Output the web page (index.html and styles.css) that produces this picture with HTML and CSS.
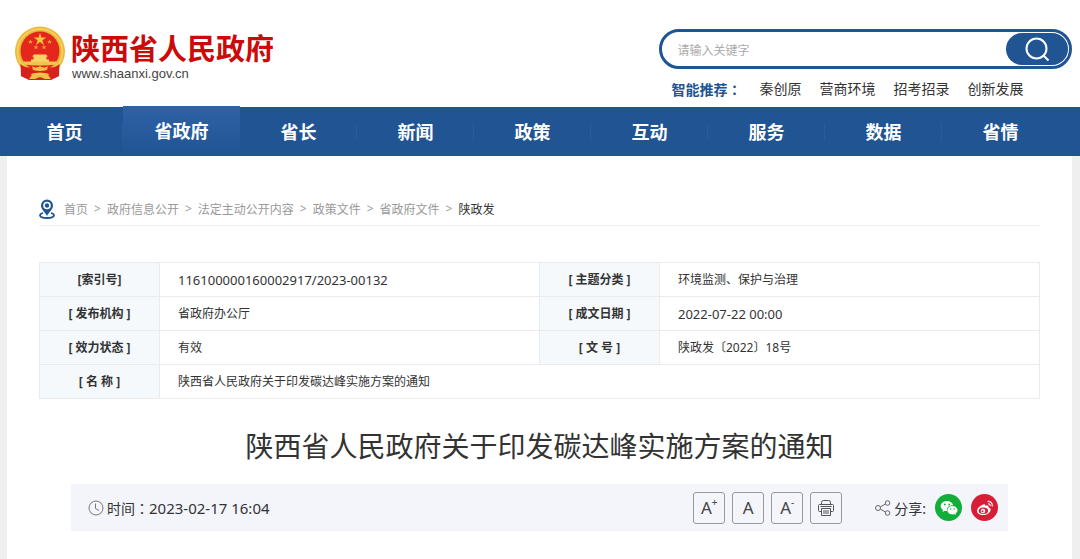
FILE: index.html
```html
<!DOCTYPE html>
<html lang="zh-CN">
<head>
  <meta charset="UTF-8">
  <meta name="viewport" content="width=device-width, initial-scale=1.0">
  <title>陕西省人民政府关于印发碳达峰实施方案的通知</title>
  <link rel="stylesheet" href="styles.css">
</head>
<body>
  <header class="header">
    <a class="logo" href="#">
      <svg class="emblem" viewBox="0 0 52 54" aria-hidden="true">
        <path d="M7 36 L7 50 L15 54 L37 54 L45 50 L45 36 Z" fill="#d8201c"/>
        <circle cx="26" cy="25.500" r="25" fill="#e8b93a"/>
        <circle cx="26" cy="25.500" r="22.500" fill="none" stroke="#f4cf55" stroke-width="2"/>
        <circle cx="26" cy="25" r="19.500" fill="#e5261c"/>
        <path d="M26 7l1.500 4.500h4.800l-3.900 2.800 1.500 4.600-3.900-2.800-3.900 2.800 1.500-4.600-3.900-2.800h4.800z" fill="#f5c83c"/>
        <path d="M16.500 13.500l.7 1.500h1.700l-1.300 1.100.5 1.700-1.600-1-1.600 1 .5-1.700-1.300-1.100h1.700zM35.500 13.500l.7 1.500h1.700l-1.300 1.100.5 1.700-1.600-1-1.600 1 .5-1.700-1.300-1.100h1.700zM22 19l.7 1.500h1.700l-1.300 1.100.5 1.700-1.600-1-1.600 1 .5-1.700-1.300-1.100h1.700zM30 19l.7 1.500h1.700l-1.300 1.100.5 1.700-1.600-1-1.600 1 .5-1.700-1.300-1.100h1.700z" fill="#f0a636"/>
        <path d="M20 28.500h12l2 2h-1.500v3H35v3.500H17v-3.500h2.500v-3H18z" fill="#f8d468"/>
        <path d="M8.500 35.500h35v3q-17.500 2-35 0z" fill="#f1c44c"/>
        <path d="M6.500 38 Q12 43 19 41 Q23 43 26 41 Q29 43 33 41 Q40 43 45.500 38 L45 50 L38 53 L35 48 Q26 45 17 48 L14 53 L7 50 Z" fill="#d8201c"/>
        <path d="M18 40 Q22 43 26 40 Q30 43 34 40 L33 44 Q26 46 19 44 Z M15 53 L19 47.500 L26 49.500 L33 47.500 L37 53 H31 L26 51 L21 53 Z" fill="#efc044"/>
      </svg>
      <span class="logo-text">
        <strong>陕西省人民政府</strong>
        <span>www.shaanxi.gov.cn</span>
      </span>
    </a>

    <div class="search-area">
      <form class="search">
        <input type="text" placeholder="请输入关键字" aria-label="搜索">
        <button type="button" aria-label="搜索">
          <svg width="26" height="26" viewBox="0 0 26 26" fill="none" stroke="#fff" stroke-width="2">
            <circle cx="12.500" cy="12.500" r="10"/>
            <path d="M19.500 19.500l5 5"/>
          </svg>
        </button>
      </form>
      <div class="hot">
        <strong>智能推荐<span lang="zh-TW">：</span></strong>
        <a href="#">秦创原</a>
        <a href="#">营商环境</a>
        <a href="#">招考招录</a>
        <a href="#">创新发展</a>
      </div>
    </div>
  </header>

  <nav class="nav">
    <a href="#">首页</a>
    <a href="#" class="active">省政府</a>
    <a href="#">省长</a>
    <a href="#">新闻</a>
    <a href="#">政策</a>
    <a href="#">互动</a>
    <a href="#">服务</a>
    <a href="#">数据</a>
    <a href="#">省情</a>
  </nav>

  <main class="main">
    <div class="crumbs">
      <svg width="16" height="20" viewBox="0 0 16 20" fill="none" stroke="#205493" aria-hidden="true">
        <path d="M4 14C2 14.500 1 15.300 1 16.300 1 18 4 19 8 19s7-1 7-2.700c0-1-1-1.800-3-2.300" stroke-width="1.800"/>
        <path d="M8 .5a6 6 0 0 0-6 6C2 10.500 6 13 8 17c2-4 6-6.500 6-10.500a6 6 0 0 0-6-6z" fill="#205493" stroke="none"/>
        <circle cx="8" cy="6.500" r="3" fill="#205493" stroke="#fff" stroke-width="1.600"/>
      </svg>
      <a href="#">首页</a><span>&gt;</span>
      <a href="#">政府信息公开</a><span>&gt;</span>
      <a href="#">法定主动公开内容</a><span>&gt;</span>
      <a href="#">政策文件</a><span>&gt;</span>
      <a href="#">省政府文件</a><span>&gt;</span>
      <a href="#" class="current">陕政发</a>
    </div>

    <table class="info">
      <tr>
        <th>[索引号]</th>
        <td class="num">116100000160002917/2023-00132</td>
        <th>[ 主题分类 ]</th>
        <td>环境监测、保护与治理</td>
      </tr>
      <tr>
        <th>[ 发布机构 ]</th>
        <td>省政府办公厅</td>
        <th>[ 成文日期 ]</th>
        <td class="num">2022-07-22 00:00</td>
      </tr>
      <tr>
        <th>[ 效力状态 ]</th>
        <td>有效</td>
        <th>[ 文 号 ]</th>
        <td>陕政发〔2022〕18号</td>
      </tr>
      <tr>
        <th>[ 名 称 ]</th>
        <td colspan="3">陕西省人民政府关于印发碳达峰实施方案的通知</td>
      </tr>
    </table>

    <h1>陕西省人民政府关于印发碳达峰实施方案的通知</h1>

    <div class="toolbar">
      <div class="time">
        <svg width="16" height="16" viewBox="0 0 16 16" fill="none" stroke="#777" aria-hidden="true">
          <circle cx="8" cy="8" r="7"/>
          <path d="M7.500 3.500V8.500l3.500 2"/>
        </svg>
        <span>时间<span lang="zh-TW">：</span></span><time>2023-02-17 16:04</time>
      </div>
      <div class="tools">
        <button type="button">A<sup>+</sup></button>
        <button type="button">A</button>
        <button type="button">A<sup>-</sup></button>
        <button type="button" aria-label="打印">
          <svg width="16" height="16" viewBox="0 0 16 16" fill="none" stroke="#555">
            <path d="M3.500 4.500v-2a2 2 0 0 1 2-2h5a2 2 0 0 1 2 2v2M3.500 11.500h-2a1 1 0 0 1-1-1v-5a1 1 0 0 1 1-1h13a1 1 0 0 1 1 1v5a1 1 0 0 1-1 1h-2M3.500 8.500h9v7h-9zM5 11h6M5 13h6M2.500 6.500h11"/>
          </svg>
        </button>
      </div>
      <div class="share">
        <svg width="16" height="16" viewBox="0 0 16 16" fill="none" stroke="#666" aria-hidden="true">
          <circle cx="3" cy="8" r="2.500"/>
          <circle cx="12.500" cy="3" r="2.300"/>
          <circle cx="12.500" cy="13" r="2.300"/>
          <path d="M5.300 7l5-3M5.300 9l5 3"/>
        </svg>
        <span>分享:</span>
        <a href="#" class="wechat" aria-label="微信">
          <svg width="18" height="16" viewBox="0 0 18 16" aria-hidden="true">
            <path fill="#fff" d="M7 1C3.400 1 .7 3.200.7 6c0 1.600.9 3 2.300 3.900L2.500 12l2.300-1.200c.7.2 1.400.3 2.200.3C6.200 7.500 9.500 5 13.200 5.200 12.500 2.700 10 1 7 1z"/>
            <path fill="#fff" d="M12.500 6C9.600 6 7.400 7.900 7.400 10.200s2.200 4.200 5.100 4.200c.6 0 1.200-.1 1.700-.3l1.900 1-.5-1.700c1.200-.8 1.900-1.900 1.900-3.200C17.500 7.900 15.300 6 12.500 6z"/>
            <g fill="#12ae3a"><circle cx="4.800" cy="4.500" r=".9"/><circle cx="9.200" cy="4.500" r=".9"/><circle cx="10.800" cy="9" r=".7"/><circle cx="14.200" cy="9" r=".7"/></g>
          </svg>
        </a>
        <a href="#" class="weibo" aria-label="微博">
          <svg width="18" height="16" viewBox="0 0 18 16" fill="none" aria-hidden="true">
            <path fill="#fff" d="M7 4.500c1.300-.6 2.500-.3 2.300 1.300 2-.8 3.700-.4 3.200 1.500 1.500.5 2.300 1.400 2 2.900-.4 2.600-3.500 4.600-7 4.800C3.800 15.200 1 13.400 1 10.800 1 8.200 4.500 5.500 7 4.500z"/>
            <ellipse cx="7.400" cy="10.700" rx="4.700" ry="3.200" fill="#d81e37"/>
            <circle cx="7" cy="11" r="2.300" fill="#fff"/>
            <circle cx="6.500" cy="11.300" r="1" fill="#d81e37"/>
            <path stroke="#fff" stroke-width="1.200" d="M11.500 1.500c3-.5 5.500 2 4.700 5M12 3.800c1.500-.2 2.500.8 2.100 2.200"/>
          </svg>
        </a>
      </div>
    </div>
  </main>
</body>
</html>
```

FILE: styles.css
```css
* {
  box-sizing: border-box;
}
body {
  margin: 0;
  font-family: "Noto Sans", "Noto Sans CJK SC", sans-serif;
  font-size: 12px;
  color: #333;
  background-color: #efefef;
}
a {
  color: inherit;
  text-decoration: none;
}
button {
  font-family: inherit;
  cursor: pointer;
}
svg {
  display: block;
  flex: none;
}
/* centred full-width colon */
[lang="zh-TW"] {
  font-family: "Noto Sans CJK TC", sans-serif;
}

/* header */
.header {
  display: flex;
  justify-content: space-between;
  height: 107px;
  padding: 0 8px 0 14px;
  background-color: #fff;
}
.logo {
  display: flex;
  align-items: flex-start;
  gap: 5px;
  padding-top: 26px;
}
.emblem {
  width: 52px;
  height: 54px;
}
.logo-text {
  display: flex;
  flex-direction: column;
  padding-top: 5px;
}
.logo-text strong {
  font-size: 29px;
  line-height: 36px;
  color: #cc0a0a;
}
.logo-text span {
  padding-left: 1px;
  font-family: "Liberation Sans", Arial, sans-serif;
  font-size: 13px;
  line-height: 14px;
  color: #444;
}
.search-area {
  width: 39%;
  padding-top: 29px;
}
.search {
  display: flex;
  height: 40px;
  padding: 1px;
  border: 3px solid #205493;
  border-radius: 20px;
}
.search input {
  flex: 1;
  min-width: 0;
  padding: 2px 14px 0;
  border: none;
  outline: none;
  background: none;
  font-family: inherit;
  font-size: 12px;
}
.search input::placeholder {
  color: #aaa;
}
.search button {
  display: flex;
  align-items: center;
  justify-content: center;
  width: 62px;
  padding: 0;
  border: none;
  border-radius: 17px;
  background-color: #205493;
}
.hot {
  display: flex;
  gap: 18px;
  padding: 10px 0 0 12px;
  font-size: 14px;
  line-height: 20px;
}
.hot strong {
  color: #205493;
}

/* nav */
.nav {
  display: flex;
  height: 49px;
  padding: 0 21px 0 6px;
  background-color: #205493;
}
.nav a {
  flex: 1;
  font-size: 18px;
  font-weight: bold;
  line-height: 51px;
  text-align: center;
  color: #fff;
  background: linear-gradient(#2b5c99, #2b5c99) right center / 1px 18px no-repeat;
}
.nav a:last-child {
  background: none;
}
.nav .active {
  margin-top: -1px;
  background: linear-gradient(#2e62a6, #205493);
}

/* content */
.main {
  margin: 0 8px 0 7px;
  padding: 36px 32px 28px;
  background-color: #fff;
}
.crumbs {
  display: flex;
  align-items: center;
  gap: 6px;
  height: 34px;
  border-bottom: 1px solid #f0f0f0;
  color: #999;
}
.crumbs svg {
  margin-right: 3px;
}
.crumbs .current {
  color: #333;
}
.info {
  width: 100%;
  margin-top: 36px;
  border-collapse: collapse;
  table-layout: fixed;
}
.info th,
.info td {
  height: 34px;
  padding: 0;
  border: 1px solid #ebebeb;
  line-height: 20px;
}
.info th {
  width: 12%;
  background-color: #f5f9fc;
}
.info td {
  padding-left: 18px;
}
.info .num {
  font-size: 13px;
}
h1 {
  margin: 26px 0 17px;
  font-size: 28px;
  font-weight: normal;
  line-height: 42px;
  text-align: center;
}

/* toolbar */
.toolbar {
  display: flex;
  align-items: center;
  height: 47px;
  margin: 0 32px;
  padding: 0 10px 0 17px;
  background-color: #f4f5fb;
  font-size: 14px;
}
.time,
.share {
  display: flex;
  align-items: center;
}
.time {
  flex: 1;
}
.time svg {
  margin-right: 3px;
}
.time time {
  font-size: 15px;
}
.tools {
  display: flex;
  gap: 7px;
  margin-right: 33px;
}
.tools button {
  display: flex;
  align-items: center;
  justify-content: center;
  width: 32px;
  height: 32px;
  padding: 0;
  border: 1px solid #999;
  border-radius: 3px;
  background: none;
  font-size: 17px;
  color: #444;
}
.tools sup {
  align-self: flex-start;
  font-size: 10px;
  line-height: 18px;
}
.share > span {
  margin: 0 9px 0 3px;
}
.share a {
  display: flex;
  align-items: center;
  justify-content: center;
  width: 27px;
  height: 27px;
  border-radius: 50%;
}
.share .wechat {
  margin-right: 9px;
  background-color: #12ae3a;
}
.share .weibo {
  background-color: #d81e37;
}
```
